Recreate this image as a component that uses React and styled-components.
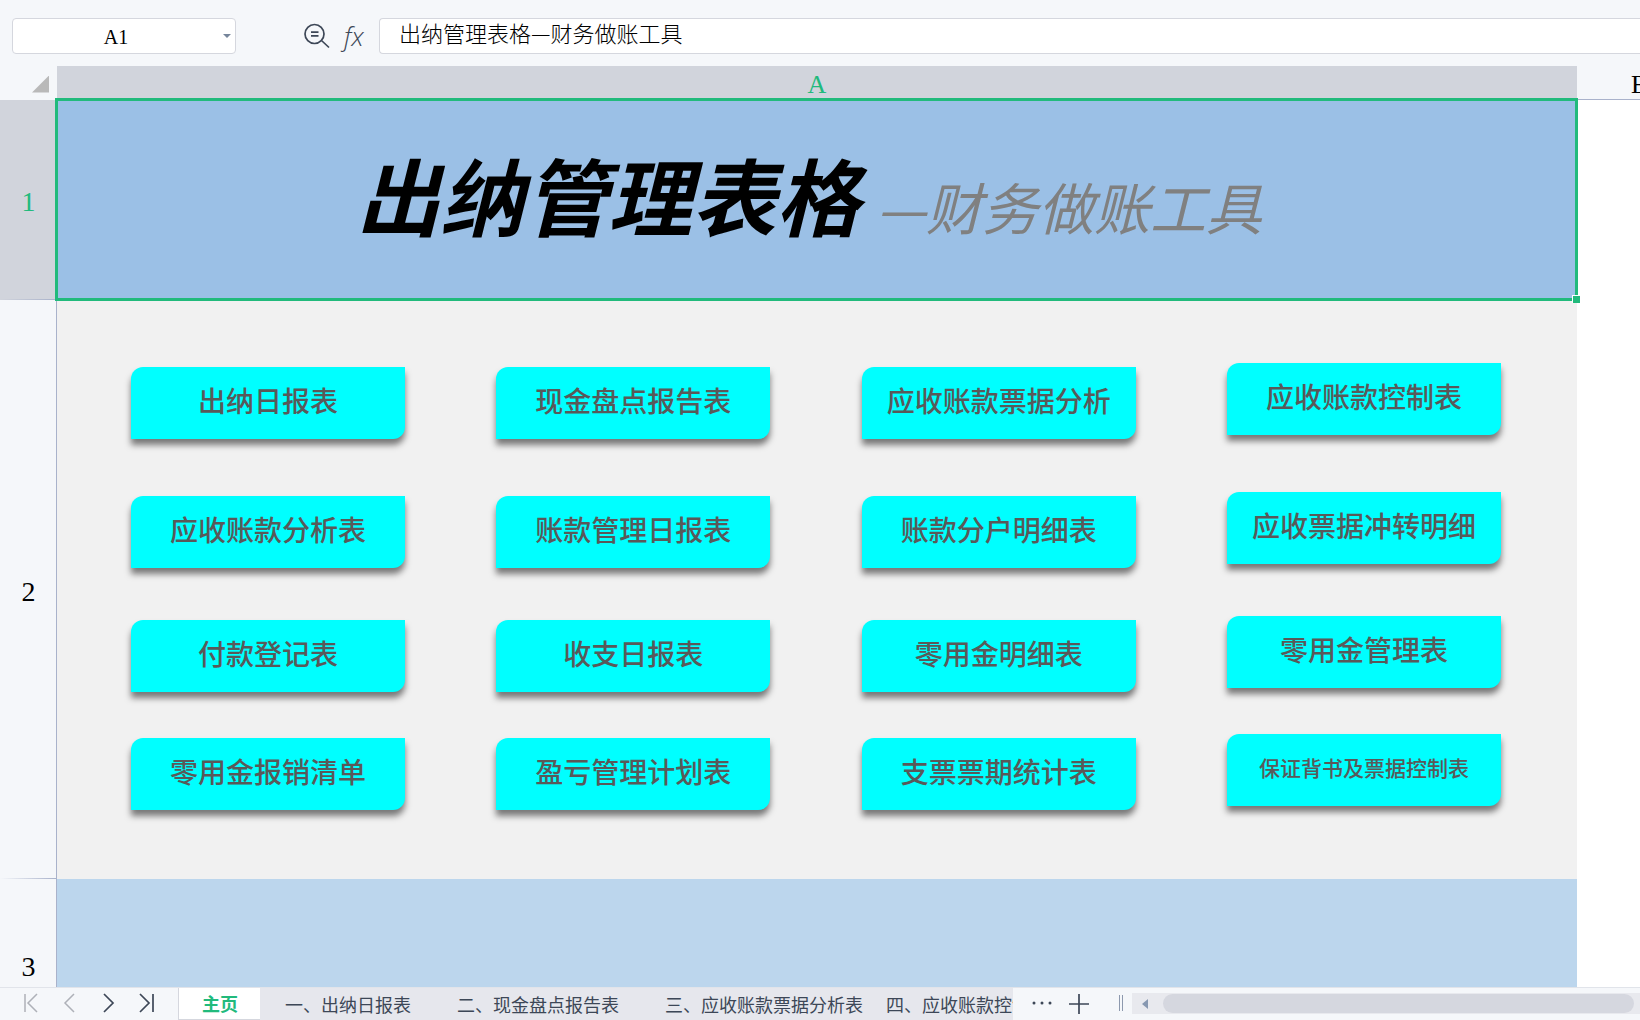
import React from 'react'
import styled, { createGlobalStyle, css, ThemeProvider } from 'styled-components'

const theme = {
    color: {
        chrome: '#f5f7fa',
        header: '#d1d4dc',
        line: '#a9b2cb',
        border: '#d5d7de',
        green: '#21ba7c',
        ink: '#3d4757',
        faded: '#aeb1b8',
        tab: '#e6e7ed',
    },
    font: {
        cjk: "'Noto Sans CJK SC', sans-serif",
        serif: "'Liberation Serif', serif",
    },
}

const shapes = [
    ['出纳日报表', '现金盘点报告表', '应收账款票据分析', '应收账款控制表'],
    ['应收账款分析表', '账款管理日报表', '账款分户明细表', '应收票据冲转明细'],
    ['付款登记表', '收支日报表', '零用金明细表', '零用金管理表'],
    ['零用金报销清单', '盈亏管理计划表', '支票票期统计表', '保证背书及票据控制表'],
]

const tabs = ['一、出纳日报表', '二、现金盘点报告表', '三、应收账款票据分析表']

const GlobalStyle = createGlobalStyle`
    * {
        box-sizing: border-box;
    }
    body {
        margin: 0;
    }
    button,
    input {
        font: inherit;
        color: inherit;
        border: 0;
        padding: 0;
        background: none;
        outline: none;
    }
`

const Page = styled.div`
    display: flex;
    flex-direction: column;
    height: 100vh;
    overflow: hidden;
    background: ${({ theme }) => theme.color.chrome};
    color: ${({ theme }) => theme.color.ink};
    font-family: ${({ theme }) => theme.font.cjk};
`

/* formula bar */

const FormulaBar = styled.header`
    display: flex;
    align-items: center;
    flex: none;
    height: 66px;
    padding: 6px 0 0 12px;
`

const fieldBox = css`
    height: 36px;
    background: #fff;
    border: 1px solid ${({ theme }) => theme.color.border};
`

const NameBox = styled.div`
    ${fieldBox}
    display: flex;
    width: 224px;
    border-radius: 4px;

    input {
        flex: 1;
        min-width: 0;
        padding-top: 2px;
        text-align: center;
        font: 20px ${({ theme }) => theme.font.serif};
        color: #000;
    }

    button {
        width: 16px;
    }
`

const Tools = styled.div`
    display: flex;
    align-items: center;
    gap: 14px;
    margin-left: 68px;
    width: 75px;
`

const FxButton = styled.button`
    font: italic 300 26px/28px 'Open Sans', sans-serif;
`

const FormulaInput = styled.input`
    && {
        ${fieldBox}
        flex: 1;
        min-width: 0;
        border-right: 0;
        border-radius: 4px 0 0 4px;
        padding: 0 19px 8px;
        font-size: 22px;
        font-weight: 300;
        color: #000;
    }
`

/* sheet */

const SheetArea = styled.main`
    flex: 1;
    min-height: 0;
    overflow: hidden;
    background: #fff;
`

const Sheet = styled.table`
    width: 100%;
    table-layout: fixed;
    border-collapse: separate;
    border-spacing: 0;

    th,
    td {
        padding: 0;
    }
`

const RowHeadCol = styled.col`
    width: 57px;
`

const NextCol = styled.col`
    width: 63px;
`

const SheetRow = styled.tr`
    height: ${({ $height }) => $height}px;
`

const headText = css`
    font-family: ${({ theme }) => theme.font.serif};
    font-size: 28px;
    line-height: 28px;
    font-weight: 400;
    color: #000;
`

const Corner = styled.th`
    background: ${({ theme }) => theme.color.chrome};

    button {
        display: block;
        width: 17px;
        height: 17px;
        margin: 2px 0 0 32px;
        background: #b9b9b9;
        clip-path: polygon(100% 0, 100% 100%, 0 100%);
    }
`

const ColHead = styled.th`
    ${headText}
    font-size: 26px;
    overflow: hidden;
    vertical-align: bottom;
    background: ${({ theme }) => theme.color.chrome};
    border-bottom: 1px solid ${({ theme }) => theme.color.line};

    ${({ $active, theme }) =>
        $active
            ? css`
                  color: ${theme.color.green};
                  background: ${theme.color.header};
              `
            : css`
                  text-align: left;
                  padding-left: 54px !important;
              `}
`

const RowHead = styled.th`
    ${headText}
    && {
        padding: 4px 0 0 1px;
    }
    border-right: 1px solid ${({ theme }) => theme.color.line};
    background:
        linear-gradient(to right, transparent, ${({ theme }) => theme.color.line})
            bottom / 100% 1px no-repeat,
        ${({ $active, theme }) =>
            $active ? theme.color.header : theme.color.chrome};
    color: ${({ $active, theme }) => ($active ? theme.color.green : '#000')};
`

const TitleCell = styled.td`
    position: relative;
    background: #9bc0e6;
    text-align: center;
    white-space: nowrap;
`

const Selection = styled.span`
    position: absolute;
    inset: -2px -1px -1px -2px;
    border: 3px solid ${({ theme }) => theme.color.green};
    pointer-events: none;

    &:after {
        content: '';
        position: absolute;
        right: -5px;
        bottom: -5px;
        width: 7px;
        height: 7px;
        border: 1px solid #fff;
        border-right: 0;
        border-bottom: 0;
        background: ${({ theme }) => theme.color.green};
    }
`

const Title = styled.h1`
    margin: 0;
    padding-right: 16px;
    font-size: 84px;
    line-height: 120px;
    font-style: italic;
    font-weight: 700;
    color: #000;

    small {
        margin-left: 16px;
        font-size: 56px;
        font-weight: 400;
        color: #808080;
    }
`

const ShapeCell = styled.td`
    background: #f1f1f1;
    vertical-align: top;
`

const ShapeGrid = styled.nav`
    display: grid;
    grid-template-columns: repeat(4, 274px);
    grid-template-rows: 129px 124px 118px 72px;
    justify-content: space-between;
    padding: 67px 76px 0 74px;
`

const Shape = styled.button`
    && {
        height: 72px;
        padding-bottom: 6px;
        border-radius: 12px 0;
        background: #00ffff;
        box-shadow: 0 6px 6px rgba(0, 0, 0, 0.5);
        color: #595959;
        font-size: ${({ $small }) => ($small ? 21 : 28)}px;
        font-weight: 500;
        white-space: nowrap;
        cursor: pointer;
    }

    /* the last column sits slightly higher on the sheet */
    &:nth-child(4n) {
        margin-top: -4px;
    }
`

const FooterCell = styled.td`
    background: #bcd6ed;
`

/* bottom bar */

const BottomBar = styled.footer`
    display: flex;
    flex: none;
    height: 33px;
    border-top: 1px solid #e1e4ea;
`

const Pager = styled.div`
    display: flex;
    justify-content: space-between;
    width: 178px;
    padding: 0 22px;

    button {
        width: 18px;
        height: 30px;
    }

    button:disabled {
        color: ${({ theme }) => theme.color.faded};
    }
`

const Tabs = styled.nav`
    display: flex;
    width: 835px;
    overflow: hidden;
    background: ${({ theme }) => theme.color.tab};
`

const Tab = styled.button`
    && {
        flex: none;
        padding: 0 ${({ $cut }) => ($cut ? 0 : 23)}px 1px;
        font-size: 18px;
        line-height: 28px;
        white-space: nowrap;

        ${({ $active, theme }) =>
            $active &&
            css`
                width: 82px;
                margin-right: 2px;
                border: 1px solid ${theme.color.border};
                border-width: 0 0 1px 1px;
                background: #fff;
                color: ${theme.color.green};
                font-weight: 700;
            `}
    }
`

const TabTools = styled.div`
    display: flex;
    align-items: center;
    gap: 16px;
    padding: 0 9px 2px 19px;

    button {
        height: 22px;
    }
`

const Splitter = styled.span`
    width: 4px;
    height: 16px;
    margin-left: 13px;
    border: 1px solid #8d99ae;
    border-width: 0 1px;
`

const Scrollbar = styled.div`
    display: flex;
    align-items: center;
    flex: 1;
    height: 21px;
    margin-top: 5px;
    background: #e8e9ee;

    button {
        width: 31px;
        height: 21px;
        padding-right: 5px;
    }
`

const Thumb = styled.div`
    flex: 1;
    height: 19px;
    margin-right: 6px;
    border-radius: 10px;
    background: #d5d7df;
`

const Glyph = styled.svg`
    display: block;
    margin: 0 auto;
`

const Icon = ({ w = 18, h = 20, d, width = 2 }) => (
    <Glyph
        width={w}
        height={h}
        viewBox={`0 0 ${w} ${h}`}
        fill="none"
        stroke="currentColor"
        strokeWidth={width}
    >
        <path d={d} />
    </Glyph>
)

const App = () => {
    return (
        <ThemeProvider theme={theme}>
            <GlobalStyle />
            <Page>
                <FormulaBar>
                    <NameBox>
                        <input aria-label="名称框" defaultValue="A1" />
                        <button aria-label="展开">
                            <Glyph width="8" height="4" viewBox="0 0 8 4">
                                <path d="M0 0h8L4 4z" fill="#76859b" />
                            </Glyph>
                        </button>
                    </NameBox>
                    <Tools>
                        <button aria-label="查找">
                            <Icon
                                w={26}
                                h={26}
                                width={1.7}
                                d="M20 11a9.5 9.5 0 1 1-19 0a9.5 9.5 0 0 1 19 0M17.5 17.5l7.5 7M7 9.2h7.5M7 12.8h7.5"
                            />
                        </button>
                        <FxButton>fx</FxButton>
                    </Tools>
                    <FormulaInput
                        aria-label="编辑栏"
                        defaultValue="出纳管理表格—财务做账工具"
                    />
                </FormulaBar>

                <SheetArea>
                    <Sheet>
                        <colgroup>
                            <RowHeadCol />
                            <col />
                            <NextCol />
                        </colgroup>
                        <thead>
                            <SheetRow $height={34}>
                                <Corner>
                                    <button aria-label="全选" />
                                </Corner>
                                <ColHead $active>A</ColHead>
                                <ColHead>B</ColHead>
                            </SheetRow>
                        </thead>
                        <tbody>
                            <SheetRow $height={200}>
                                <RowHead $active>1</RowHead>
                                <TitleCell>
                                    <Title>
                                        出纳管理表格
                                        <small>—财务做账工具</small>
                                    </Title>
                                    <Selection />
                                </TitleCell>
                                <td />
                            </SheetRow>
                            <SheetRow $height={579}>
                                <RowHead>2</RowHead>
                                <ShapeCell>
                                    <ShapeGrid>
                                        {shapes.flat().map(label => (
                                            <Shape
                                                key={label}
                                                $small={label.length > 8}
                                            >
                                                {label}
                                            </Shape>
                                        ))}
                                    </ShapeGrid>
                                </ShapeCell>
                                <td />
                            </SheetRow>
                            <SheetRow $height={172}>
                                <RowHead>3</RowHead>
                                <FooterCell />
                                <td />
                            </SheetRow>
                        </tbody>
                    </Sheet>
                </SheetArea>

                <BottomBar>
                    <Pager>
                        <button disabled aria-label="第一个">
                            <Icon d="M3 1v18M15 1L6 10l9 9" width={1.5} />
                        </button>
                        <button disabled aria-label="上一个">
                            <Icon d="M13 1L4 10l9 9" width={1.5} />
                        </button>
                        <button aria-label="下一个">
                            <Icon d="M5 1l9 9l-9 9" width={1.7} />
                        </button>
                        <button aria-label="最后一个">
                            <Icon d="M2 1l9 9l-9 9M15 1v18" width={1.7} />
                        </button>
                    </Pager>
                    <Tabs>
                        <Tab $active>主页</Tab>
                        {tabs.map(label => (
                            <Tab key={label}>{label}</Tab>
                        ))}
                        <Tab $cut>四、应收账款控制表</Tab>
                    </Tabs>
                    <TabTools>
                        <button aria-label="更多">
                            <Glyph
                                width="20"
                                height="20"
                                viewBox="0 0 20 20"
                                fill="currentColor"
                            >
                                <circle cx="2" cy="10" r="1.5" />
                                <circle cx="10" cy="10" r="1.5" />
                                <circle cx="18" cy="10" r="1.5" />
                            </Glyph>
                        </button>
                        <button aria-label="新建">
                            <Icon
                                w={22}
                                h={22}
                                width={1.7}
                                d="M1 12h20M11 2v20"
                            />
                        </button>
                        <Splitter />
                    </TabTools>
                    <Scrollbar>
                        <button aria-label="向左滚动">
                            <Glyph width="6" height="10" viewBox="0 0 6 10">
                                <path d="M6 0v10L0 5z" fill="#8798b1" />
                            </Glyph>
                        </button>
                        <Thumb />
                    </Scrollbar>
                </BottomBar>
            </Page>
        </ThemeProvider>
    )
}

export default App
